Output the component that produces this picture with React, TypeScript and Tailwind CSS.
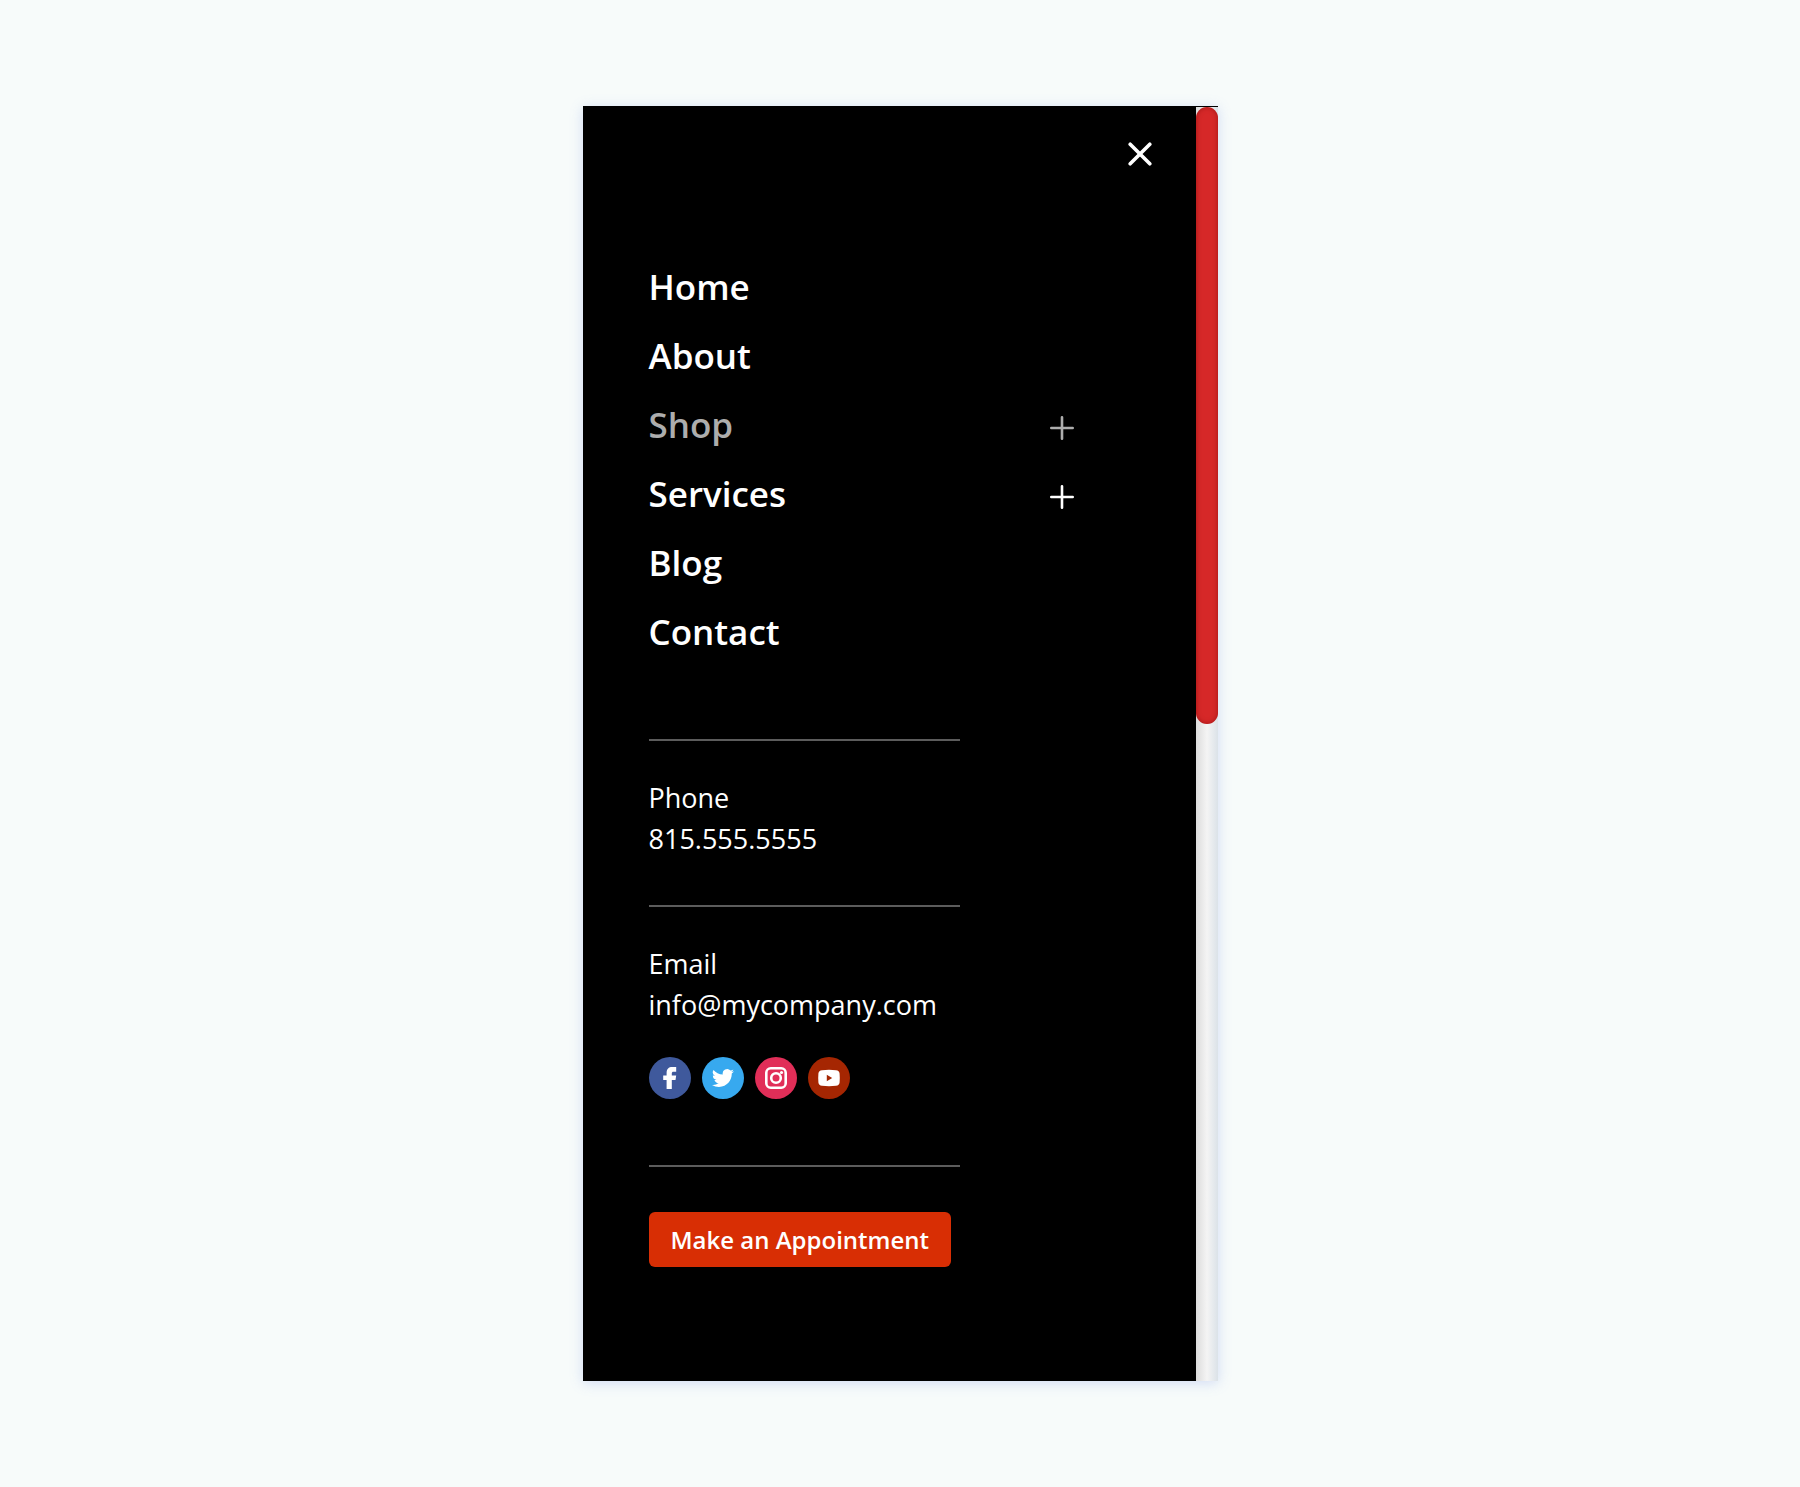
import type { ReactNode } from "react";

type NavItem = { label: string; expandable?: boolean; muted?: boolean };

const navItems: NavItem[] = [
  { label: "Home" },
  { label: "About" },
  { label: "Shop", expandable: true, muted: true },
  { label: "Services", expandable: true },
  { label: "Blog" },
  { label: "Contact" },
];

function NavRow({ label, expandable, muted }: NavItem) {
  return (
    <li className={muted ? "flex items-center justify-between text-[#adadad]" : "flex items-center justify-between text-white"}>
      <a href="#" className="text-[35px] leading-[69px] font-semibold">
        {label}
      </a>
      {expandable && (
        <button type="button" aria-label={`Expand ${label}`} className="mt-1.5">
          <svg viewBox="0 0 24 24" className="size-6" fill="none" stroke="currentColor" strokeWidth="2.6" strokeLinecap="round">
            <path d="M12 1.3v21.4M1.3 12h21.4" />
          </svg>
        </button>
      )}
    </li>
  );
}

function Divider() {
  return <hr className="h-0.5 w-[311px] max-w-full border-0 bg-[#5c5c5c]" />;
}

function Contact({ label, value, href }: { label: string; value: string; href: string }) {
  return (
    <div className="mt-9 text-[27px] leading-[41px] text-white">
      <p>{label}</p>
      <a href={href}>{value}</a>
    </div>
  );
}

function Social({ label, className, children }: { label: string; className: string; children: ReactNode }) {
  return (
    <a href="#" aria-label={label} className={`flex size-[42px] items-center justify-center rounded-full text-white ${className}`}>
      {children}
    </a>
  );
}

export default function App() {
  return (
    <main className="flex min-h-screen items-center justify-center bg-[#f7fbfa] font-['Open_Sans',sans-serif]">
      <div className="flex w-[635px] max-w-full bg-black shadow-[0_2px_12px_rgba(110,140,230,0.28)]">
        <section className="flex-1 pt-9 pb-[114px] pl-[66px]">
          <div className="flex justify-end pr-11">
            <button type="button" aria-label="Close menu" className="text-white">
              <svg viewBox="0 0 24 24" className="size-6" fill="none" stroke="currentColor" strokeWidth="3.6" strokeLinecap="round">
                <path d="M2.2 2.2l19.6 19.6M21.8 2.2L2.2 21.8" />
              </svg>
            </button>
          </div>

          <nav aria-label="Main" className="mt-[86px] mb-[73px] pr-[122px]">
            <ul>
              {navItems.map((item) => (
                <NavRow key={item.label} {...item} />
              ))}
            </ul>
          </nav>

          <Divider />
          <Contact label="Phone" value="815.555.5555" href="tel:8155555555" />
          <div className="mt-[46px]">
            <Divider />
          </div>
          <Contact label="Email" value="info@mycompany.com" href="mailto:info@mycompany.com" />

          <div className="mt-8 mb-[66px] flex gap-[11px]">
            <Social label="Facebook" className="bg-[#3f599c]">
              <svg viewBox="0 0 24 24" className="size-6" fill="currentColor">
                <path d="M8.6 23V14H5.2V9.4h3.4V6.8C8.6 3 10.8 1 14.2 1h4v4.8h-2.7c-1.2 0-1.7.6-1.7 1.6v2h4.4l-.7 4.6h-3.7V23z" />
              </svg>
            </Social>
            <Social label="Twitter" className="bg-[#37a9ef]">
              <svg viewBox="0 0 24 24" className="size-[22px]" fill="currentColor">
                <path d="M23.95 4.57a10 10 0 0 1-2.82.77 4.96 4.96 0 0 0 2.16-2.72c-.95.55-2 .96-3.13 1.18a4.92 4.92 0 0 0-8.38 4.48C7.69 8.1 4.07 6.13 1.64 3.16a4.92 4.92 0 0 0 1.52 6.57 4.9 4.9 0 0 1-2.23-.61v.06a4.92 4.92 0 0 0 3.95 4.83 5 5 0 0 1-2.21.08 4.94 4.94 0 0 0 4.6 3.42A9.87 9.87 0 0 1 0 19.54a13.99 13.99 0 0 0 7.55 2.21c9.06 0 14.01-7.5 14.01-13.98 0-.21 0-.42-.02-.63a9.94 9.94 0 0 0 2.41-2.57z" />
              </svg>
            </Social>
            <Social label="Instagram" className="bg-[#e12e58]">
              <svg viewBox="0 0 24 24" className="size-6" fill="none" stroke="currentColor" strokeWidth="2.6">
                <rect x="2.3" y="2.3" width="19.4" height="19.4" rx="4.5" />
                <circle cx="12" cy="12" r="4.8" />
                <circle cx="17.5" cy="6.5" r="1.6" fill="currentColor" stroke="none" />
              </svg>
            </Social>
            <Social label="YouTube" className="bg-[#a52602]">
              <svg viewBox="0 0 24 24" className="size-6" fill="currentColor">
                <path
                  fillRule="evenodd"
                  d="M5 4.2Q12 3.4 19 4.2Q22.3 4.5 22.6 7.5Q23 12 22.6 16.5Q22.3 19.5 19 19.8Q12 20.6 5 19.8Q1.7 19.5 1.4 16.5Q1 12 1.4 7.5Q1.7 4.5 5 4.2ZM9.8 8.7v6.6l5.4-3.3z"
                />
              </svg>
            </Social>
          </div>

          <Divider />
          <button type="button" className="mt-[45px] block rounded-md bg-[#d82e04] px-[22px] text-2xl leading-[55px] font-semibold text-white">
            Make an Appointment
          </button>
        </section>

        <div aria-hidden="true" className="flex w-[22px] flex-col border-t border-black bg-linear-to-r from-[#dcdcdc] via-[#f4f4f4] to-[#dbe2e8]">
          <div className="h-[617px] rounded-full bg-[#d62828] shadow-[inset_0_0_5px_rgba(110,0,0,0.5)]" />
        </div>
      </div>
    </main>
  );
}
